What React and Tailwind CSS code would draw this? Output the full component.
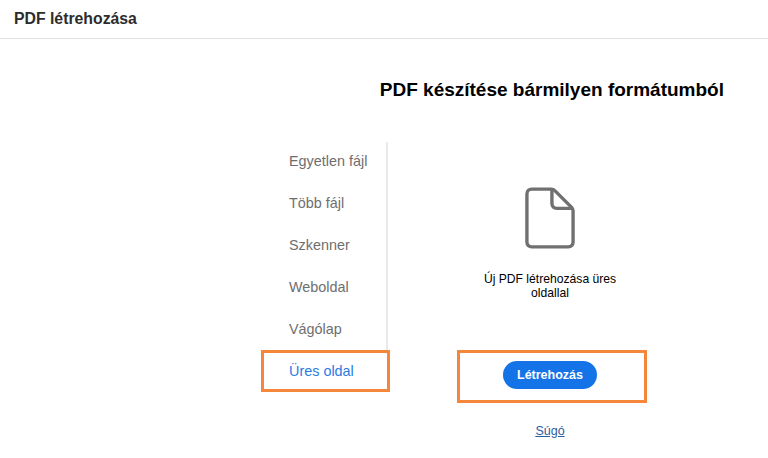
import React from "react";

const items = ["Egyetlen fájl", "Több fájl", "Szkenner", "Weboldal", "Vágólap", "Üres oldal"];

const App = () => {
  return (
    <div className="w-[768px] h-[458px] bg-white overflow-hidden font-['Liberation_Sans',Arial,sans-serif]">
      <div className="h-[39px] border-b border-[#e1e1e1] pl-[14px] flex items-center">
        <span className="text-[15.8px] font-bold text-[#2c2c2c]">PDF létrehozása</span>
      </div>

      <div className="flex justify-end pr-[44px] pt-[40px]">
        <h1 className="text-[19px] leading-[22px] font-bold text-black">PDF készítése bármilyen formátumból</h1>
      </div>

      <div className="flex pl-[262px] pt-[41px]">
        <div className="relative w-[126px] border-r-2 border-[#eaeaea] h-[210px]">
          {items.map((item, i) => (
            <div
              key={item}
              className={
                i === 5
                  ? "h-[42px] pl-[27px] pb-[2px] flex items-center text-[14.4px] text-[#2c7be5]"
                  : "h-[42px] pl-[27px] pb-[2px] flex items-center text-[14.4px] text-[#6e6e6e]"
              }
            >
              {item}
            </div>
          ))}
          <div className="absolute left-[-1px] top-[208px] w-[129px] h-[42px] border-[3px] border-[#f5873a]"></div>
        </div>

        <div className="relative w-[324px] flex flex-col items-center pt-[45px]">
          <svg width="50" height="62" viewBox="0 0 52 64" fill="none" stroke="#707070" strokeWidth="3.5" strokeLinejoin="round">
            <path d="M7 2H27.5C29 2 30 2.5 31 3.5L48.5 21C49.5 22 50 23 50 24.5V57C50 60 48 62 45 62H7C4 62 2 60 2 57V7C2 4 4 2 7 2Z" />
            <path d="M28 2.5V17C28 20 30 22 33 22H49.5" />
          </svg>
          <p className="mt-[23px] w-[150px] text-center text-[12.15px] leading-[14px] text-black">Új PDF létrehozása üres oldallal</p>
          <button className="mt-[61px] w-[94px] h-[28px] rounded-full bg-[#1473e6] text-white text-[12.5px] font-bold">
            Létrehozás
          </button>
          <a href="#" className="mt-[35px] text-[12.5px] leading-[15px] text-[#2b5d9e] underline">Súgó</a>
          <div className="absolute left-[69px] top-[208px] w-[190px] h-[53px] border-[3px] border-[#f5873a]"></div>
        </div>
      </div>
    </div>
  );
};

export default App;
